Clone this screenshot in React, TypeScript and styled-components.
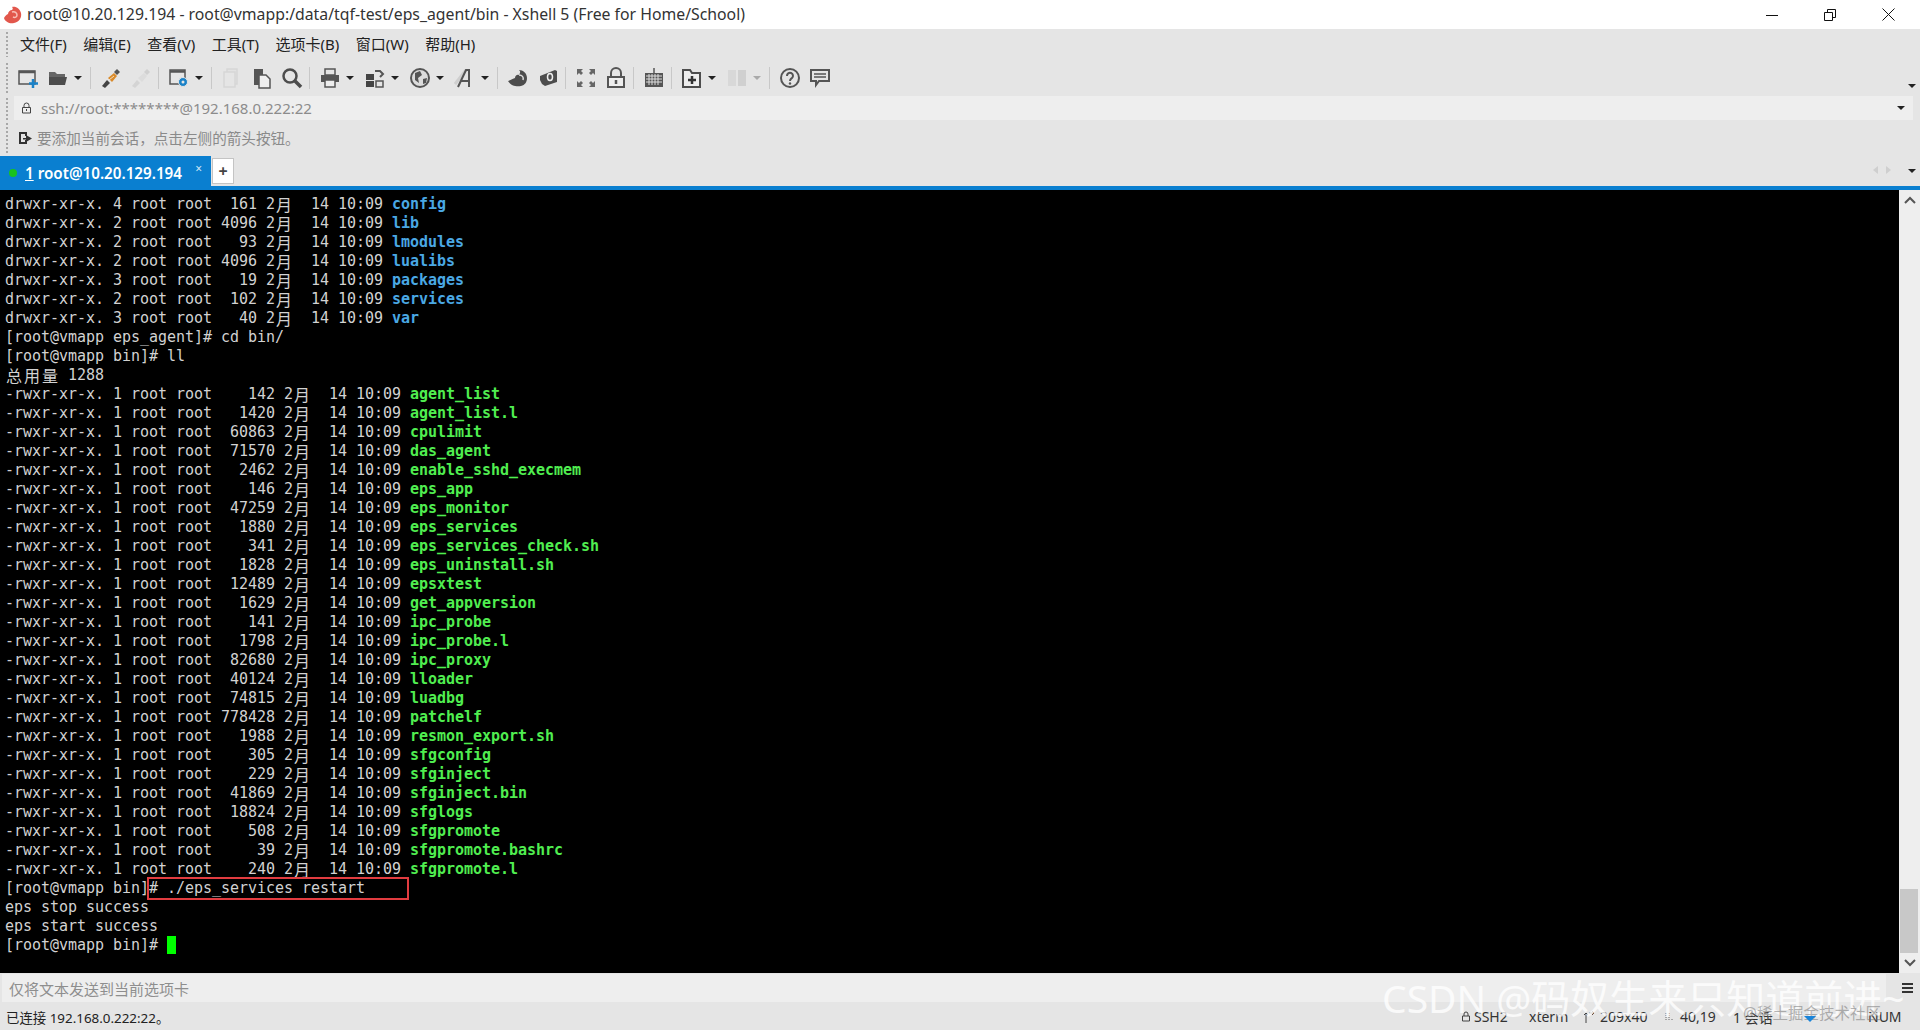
import React from 'react';
import styled, { createGlobalStyle } from 'styled-components';

const UI_FONT = '"Noto Sans", "Noto Sans CJK SC", sans-serif';

const GlobalStyle = createGlobalStyle`
  html, body {
    margin: 0;
    padding: 0;
    background: #e5e5e5;
    overflow: hidden;
  }
  * { box-sizing: border-box; }
`;

type Tone = 'plain' | 'dir' | 'exec';

const DIRS: [string, string, string][] = [
  ['4', ' 161', 'config'],
  ['2', '4096', 'lib'],
  ['2', '  93', 'lmodules'],
  ['2', '4096', 'lualibs'],
  ['3', '  19', 'packages'],
  ['2', ' 102', 'services'],
  ['3', '  40', 'var'],
];

const FILES: [string, string][] = [
  ['   142', 'agent_list'],
  ['  1420', 'agent_list.l'],
  [' 60863', 'cpulimit'],
  [' 71570', 'das_agent'],
  ['  2462', 'enable_sshd_execmem'],
  ['   146', 'eps_app'],
  [' 47259', 'eps_monitor'],
  ['  1880', 'eps_services'],
  ['   341', 'eps_services_check.sh'],
  ['  1828', 'eps_uninstall.sh'],
  [' 12489', 'epsxtest'],
  ['  1629', 'get_appversion'],
  ['   141', 'ipc_probe'],
  ['  1798', 'ipc_probe.l'],
  [' 82680', 'ipc_proxy'],
  [' 40124', 'lloader'],
  [' 74815', 'luadbg'],
  ['778428', 'patchelf'],
  ['  1988', 'resmon_export.sh'],
  ['   305', 'sfgconfig'],
  ['   229', 'sfginject'],
  [' 41869', 'sfginject.bin'],
  [' 18824', 'sfglogs'],
  ['   508', 'sfgpromote'],
  ['    39', 'sfgpromote.bashrc'],
  ['   240', 'sfgpromote.l'],
];

const MENU = ['文件(F)', '编辑(E)', '查看(V)', '工具(T)', '选项卡(B)', '窗口(W)', '帮助(H)'];

const Window = styled.div`
  width: 1920px;
  height: 1030px;
  display: flex;
  flex-direction: column;
  position: relative;
  overflow: hidden;
  background: #e5e5e5;
  font-family: ${UI_FONT};
`;

const TitleBar = styled.div`
  height: 29px;
  background: #fff;
  display: flex;
  align-items: center;
  padding-left: 3px;
  color: #333;
`;

const TitleText = styled.span`
  margin-left: 4px;
  margin-top: -2px;
  font-size: 15.8px;
  white-space: nowrap;
`;

const WindowControls = styled.div`
  margin-left: auto;
  display: flex;
  margin-right: 3px;
`;

const WindowButton = styled.div`
  width: 58px;
  height: 29px;
  display: flex;
  align-items: center;
  justify-content: center;
`;

const Bar = styled.div<{ $h: number }>`
  height: ${(p) => p.$h}px;
  display: flex;
  align-items: center;
  position: relative;
`;

const Grip = styled.div`
  position: absolute;
  left: 6px;
  top: 3px;
  bottom: 3px;
  width: 2px;
  background: repeating-linear-gradient(to bottom, #a8a8a8 0 2px, transparent 2px 4px);
`;

const Menu = styled(Bar)`
  padding: 0 0 2px 20px;
  gap: 16.5px;
  font-size: 15px;
  color: #222;
`;

const Toolbar = styled(Bar)`
  padding-left: 13px;
`;

const ToolButton = styled.div`
  width: 30px;
  height: 30px;
  display: flex;
  align-items: center;
  justify-content: center;
  flex: none;
`;

const Caret = styled.div<{ $off?: boolean }>`
  width: 10px;
  margin-right: 5px;
  flex: none;
  display: flex;
  justify-content: center;
  &::before {
    content: '';
    border-left: 4px solid transparent;
    border-right: 4px solid transparent;
    border-top: 4px solid ${(p) => (p.$off ? '#aaa' : '#222')};
  }
`;

const Sep = styled.div`
  width: 1px;
  height: 22px;
  margin: 0 5px 0 2px;
  background: #c8c8c8;
  flex: none;
`;

const EndCaret = styled.div<{ $right: number }>`
  position: absolute;
  right: ${(p) => p.$right}px;
  border-left: 4px solid transparent;
  border-right: 4px solid transparent;
  border-top: 4px solid #222;
`;

const ToolbarEnd = styled(EndCaret)`
  top: 24px;
`;

const AddressBar = styled.div`
  height: 24px;
  margin: 0 7px 0 14px;
  background: #eeeeee;
  display: flex;
  align-items: center;
  padding-left: 7px;
  gap: 9px;
  font-size: 15px;
  color: #8c8c8c;
  position: relative;
`;

const AddressRow = styled.div`
  position: relative;
`;

const AddressGrip = styled(Grip)`
  top: 2px;
  bottom: 0;
`;

const AddressCaret = styled(EndCaret)`
  top: 10px;
  right: 8px;
`;

const Hint = styled(Bar)`
  padding: 0 0 1px 19px;
  gap: 5px;
  font-size: 14.6px;
  color: #8a8a8a;
`;

const TabStrip = styled.div`
  height: 34px;
  border-bottom: 4px solid #0a7fd0;
  display: flex;
  align-items: stretch;
  position: relative;
`;

const Tab = styled.div`
  width: 211px;
  background: #0a7fd0;
  color: #fff;
  display: flex;
  align-items: center;
  padding: 3px 0 0 9px;
  font-size: 15.2px;
  font-weight: 600;
  position: relative;
`;

const TabDot = styled.span`
  width: 8px;
  height: 8px;
  border-radius: 50%;
  background: #19c21e;
  margin-right: 8px;
`;

const TabNumber = styled.span`
  text-decoration: underline;
  margin-right: 4px;
`;

const TabClose = styled.span`
  position: absolute;
  right: 9px;
  top: 4px;
  font-size: 12px;
  font-weight: 400;
  color: #cfe6f7;
`;

const AddTab = styled.div`
  width: 22px;
  height: 26px;
  margin: 2px 0 0 1px;
  background: #fff;
  border: 1px solid #c4c4c4;
  display: flex;
  align-items: center;
  justify-content: center;
  font-size: 16px;
  font-weight: 700;
  color: #444;
`;

const TabNav = styled.div<{ $flip?: boolean; $right: number }>`
  position: absolute;
  top: 10px;
  right: ${(p) => p.$right}px;
  border-top: 4px solid transparent;
  border-bottom: 4px solid transparent;
  ${(p) => (p.$flip ? 'border-left: 5px solid #cfcfcf;' : 'border-right: 5px solid #cfcfcf;')}
`;

const TabEndCaret = styled(EndCaret)`
  top: 13px;
  right: 4px;
`;

const TerminalArea = styled.div`
  height: 783px;
  background: #000;
  display: flex;
`;

const Screen = styled.div`
  flex: 1;
  padding: 5px 0 0 5px;
  overflow: hidden;
  font-family: "DejaVu Sans Mono", "Liberation Mono", monospace;
  font-size: 15px;
  letter-spacing: -0.03px;
  line-height: 19px;
  color: #d2d2d2;
`;

const Line = styled.div`
  height: 19px;
  white-space: pre;
`;

const Wide = styled.span`
  display: inline-block;
  width: 18px;
  font-family: "Noto Sans CJK SC", sans-serif;
  font-size: 16px;
  line-height: 19px;
  vertical-align: top;
  text-align: center;
`;

const Name = styled.span<{ $tone: Tone }>`
  font-weight: 700;
  color: ${(p) => (p.$tone === 'dir' ? '#4aa8e4' : '#50ee50')};
`;

const Marked = styled.span`
  position: relative;
  &::after {
    content: '';
    box-sizing: border-box;
    position: absolute;
    left: -2px;
    top: -2px;
    width: 262px;
    height: 23px;
    border: 2px solid #e23c40;
  }
`;

const Cursor = styled.span`
  display: inline-block;
  width: 9px;
  height: 18px;
  background: #00ff00;
  vertical-align: top;
  margin-left: 9px;
`;

const Scrollbar = styled.div`
  width: 21px;
  background: #eeeeee;
  display: flex;
  flex-direction: column;
  align-items: center;
  justify-content: space-between;
  padding: 6px 0;
  position: relative;
`;

const ScrollThumb = styled.div`
  position: absolute;
  left: 1px;
  right: 2px;
  top: 699px;
  height: 64px;
  background: #c8c8c8;
`;

const ComposeRow = styled.div`
  height: 30px;
  display: flex;
  align-items: center;
  position: relative;
`;

const ComposeBox = styled.div`
  margin: 0 34px 0 2px;
  flex: 1;
  height: 28px;
  background: #eeeeee;
  display: flex;
  align-items: center;
  padding-left: 7px;
  font-size: 15px;
  color: #8e8e8e;
`;

const MenuLines = styled.div`
  position: absolute;
  right: 7px;
  top: 10px;
  width: 11px;
  height: 10px;
  border-top: 2px solid #333;
  border-bottom: 2px solid #333;
  &::after {
    content: '';
    display: block;
    margin-top: 2px;
    height: 2px;
    background: #333;
  }
`;

const StatusBar = styled.div`
  flex: 1;
  display: flex;
  align-items: center;
  padding: 0 18px 0 6px;
  font-size: 13.4px;
  color: #222;
`;

const StatusRight = styled.div`
  margin-left: auto;
  display: flex;
  align-items: center;
  color: #333;
  font-size: 14px;
`;

const StatusCell = styled.span<{ $w: number; $gap?: number }>`
  width: ${(p) => p.$w}px;
  display: flex;
  align-items: center;
  gap: ${(p) => p.$gap ?? 3}px;
  white-space: nowrap;
`;

const Watermark = styled.div`
  position: absolute;
  left: 1382px;
  top: 974px;
  font-size: 39px;
  line-height: 48px;
  color: rgba(255, 255, 255, 0.78);
  white-space: nowrap;
`;

const Watermark2 = styled.div`
  position: absolute;
  left: 1743px;
  top: 1001px;
  font-size: 15.5px;
  line-height: 24px;
  color: rgba(110, 110, 110, 0.5);
  white-space: nowrap;
`;

const Arrows = styled.span`
  position: absolute;
  left: 1804px;
  top: 1016px;
  width: 0;
  height: 0;
  border-left: 6px solid transparent;
  border-right: 6px solid transparent;
  border-top: 6px solid #1b84d8;
`;

function Icon({ children, size = 22 }: { children: React.ReactNode; size?: number }) {
  return (
    <svg width={size} height={size} viewBox="0 0 22 22" fill="none">
      {children}
    </svg>
  );
}

const GRAY = '#555';

const icons: Record<string, React.ReactNode> = {
  newSession: (
    <>
      <path d="M2 4h16v13H2z" stroke={GRAY} strokeWidth="1.500" />
      <path d="M2 5h16" stroke={GRAY} strokeWidth="2.500" />
      <path d="M16 12v9M12 16.500h9" stroke="#1a82c8" strokeWidth="2.500" />
    </>
  ),
  open: (
    <>
      <path d="M2 5h6l2 2h8v3H2z" fill="#666" />
      <path d="M2 10h18l-2 8H2z" fill="#4d4d4d" />
    </>
  ),
  connect: (
    <>
      <path d="M2 19l5-6 3 3-5 5z" fill="#444" />
      <path d="M8 11l6-5 3 3-5 6z" fill="#d98a2b" />
      <path d="M9 13l5-4" stroke="#f3e0c2" strokeWidth="1" />
      <path d="M14 5l3-3 3 3-3 3z" fill="#555" />
    </>
  ),
  disconnect: (
    <>
      <path d="M2 19l5-6 3 3-5 5z" fill="#d4d4d4" />
      <path d="M8 11l6-5 3 3-5 6z" fill="#dcdcdc" />
      <path d="M14 5l3-3 3 3-3 3z" fill="#d0d0d0" />
    </>
  ),
  props: (
    <>
      <path d="M2 3h15v14H2z" stroke={GRAY} strokeWidth="1.500" />
      <path d="M2 4.500h15" stroke={GRAY} strokeWidth="2.500" />
      <circle cx="15" cy="15" r="4.500" fill="#1a82c8" stroke="#e5e5e5" />
      <circle cx="15" cy="15" r="1.500" fill="#e5e5e5" />
    </>
  ),
  copyOff: (
    <>
      <path d="M6 2h10v15H6z" stroke="#d6d6d6" strokeWidth="1.500" fill="#e2e2e2" />
      <path d="M3 5h11v15H3z" stroke="#d6d6d6" strokeWidth="1.500" fill="#e5e5e5" />
    </>
  ),
  paste: (
    <>
      <path d="M3 2h9v16H3z" fill="#555" />
      <path d="M8 8h7l4 4v9H8z" fill="#efefef" stroke="#555" strokeWidth="1.500" />
    </>
  ),
  find: (
    <>
      <circle cx="9" cy="9" r="6.500" stroke="#4d4d4d" strokeWidth="2.500" />
      <path d="M14 14l6 6" stroke="#4d4d4d" strokeWidth="3.500" />
    </>
  ),
  print: (
    <>
      <path d="M6 2h10v6H6z" stroke={GRAY} strokeWidth="1.500" />
      <path d="M2 8h18v7H2z" fill="#555" />
      <path d="M6 13h10v7H6z" fill="#eee" stroke={GRAY} strokeWidth="1.500" />
    </>
  ),
  transfer: (
    <>
      <path d="M2 7h8v6H2z" fill="#444" />
      <path d="M2 14h8v6H2z" fill="#444" />
      <path d="M12 14h7v6h-7z" stroke="#555" strokeWidth="1.500" />
      <path d="M11 4h5l3 3-3 3" stroke="#555" strokeWidth="2" />
    </>
  ),
  globe: (
    <>
      <circle cx="11" cy="11" r="9" stroke="#555" strokeWidth="2" fill="#dcdcdc" />
      <path d="M6 6l5-2 2 4-4 3 1 5-4-3zM14 12l4-1-1 5-3 1z" fill="#555" />
    </>
  ),
  font: (
    <>
      <path d="M1 17L12 3" stroke="#cfcfcf" strokeWidth="3" />
      <path d="M4 20l8-17h3v17M7 14h8" stroke="#555" strokeWidth="2" />
    </>
  ),
  snail: (
    <>
      <path d="M1 14c3 5 9 6 13 5 4-1 6-4 6-8 0-5-4-8-8-8 2 2 1 3 0 5-2-1-4 1-4 3-3 1-4 2-7 3z" fill="#4d4d4d" />
      <path d="M12 8c3 0 5 2 4 5" stroke="#ddd" strokeWidth="1.500" />
    </>
  ),
  script: (
    <>
      <path d="M3 9l5-2 10-4 2 1v11l-12 4-3-2-2-4z" fill="#4d4d4d" />
      <ellipse cx="13" cy="10" rx="2.500" ry="3.500" stroke="#eee" strokeWidth="1.500" />
    </>
  ),
  fullscreen: (
    <path d="M2 2h6l-2 2 2 2-2 2-2-2-2 2zM20 2h-6l2 2-2 2 2 2 2-2 2 2zM2 20h6l-2-2 2-2-2-2-2 2-2-2zM20 20h-6l2-2-2-2 2-2 2 2 2-2z" fill="#666" />
  ),
  lock: (
    <>
      <path d="M6 10V6a5 5 0 0 1 10 0v4" stroke="#555" strokeWidth="2" />
      <path d="M3 10h16v10H3z" stroke="#555" strokeWidth="2" fill="#eee" />
      <path d="M11 13v4" stroke="#555" strokeWidth="2.500" />
    </>
  ),
  keyboard: (
    <>
      <path d="M11 1v5" stroke="#555" strokeWidth="1.500" />
      <path d="M2 6h18v14H2z" fill="#555" />
      <path d="M3 9h16M3 12h16M3 15h16M6 7v11M9 7v11M12 7v11M15 7v11" stroke="#ddd" strokeWidth="1" />
    </>
  ),
  addTab: (
    <>
      <path d="M2 3h7l2 3h8v14H2z" stroke="#4d4d4d" strokeWidth="2" fill="#eee" />
      <path d="M11 9v8M7 13h8" stroke="#333" strokeWidth="2.500" />
    </>
  ),
  layoutOff: (
    <>
      <path d="M2 3h8v16H2z" fill="#d8d8d8" />
      <path d="M12 3h8v16h-8z" fill="#d0d0d0" />
    </>
  ),
  help: (
    <>
      <circle cx="11" cy="11" r="9" stroke="#555" strokeWidth="2" />
      <path d="M8 9a3 3 0 1 1 5 2c-1 1-2 1-2 3" stroke="#555" strokeWidth="2" />
      <circle cx="11" cy="16.500" r="1.200" fill="#555" />
    </>
  ),
  chat: (
    <>
      <path d="M2 3h18v11H10l-3 4v-4H2z" stroke="#555" strokeWidth="2" />
      <path d="M5 7h12M5 10h12" stroke="#555" strokeWidth="1.500" />
    </>
  ),
};

const Tool = ({ name }: { name: string }) => (
  <ToolButton>
    <Icon>{icons[name]}</Icon>
  </ToolButton>
);

function withWide(text: string) {
  return text.split(/([\u4e00-\u9fff])/).map((part, i) =>
    /[\u4e00-\u9fff]/.test(part) ? <Wide key={i}>{part}</Wide> : part,
  );
}

export default function App() {
  return (
    <Window>
      <GlobalStyle />
      <TitleBar>
        <svg width="20" height="20" viewBox="0 0 20 20">
          <path d="M1 13c1 4 6 6 10 5 5-1 8-5 7-10-1-4-5-7-9-6 1 1 1 2 0 3-2 0-4 2-4 4-2 1-3 2-4 4z" fill="#e2574c" />
          <path d="M9 7c3-1 5 1 5 3s-2 3-4 2" stroke="#f8c0b8" strokeWidth="1.500" fill="none" />
        </svg>
        <TitleText>root@10.20.129.194 - root@vmapp:/data/tqf-test/eps_agent/bin - Xshell 5 (Free for Home/School)</TitleText>
        <WindowControls>
          <WindowButton>
            <svg width="12" height="12"><path d="M0 6.500h12" stroke="#111" /></svg>
          </WindowButton>
          <WindowButton>
            <svg width="12" height="12"><path d="M.5 3.500h8v8h-8zM3.500 3.500v-3h8v8h-3" stroke="#111" fill="none" /></svg>
          </WindowButton>
          <WindowButton>
            <svg width="13" height="13"><path d="M.5.500l12 12M12.500.500l-12 12" stroke="#111" /></svg>
          </WindowButton>
        </WindowControls>
      </TitleBar>

      <Menu $h={31}>
        <Grip />
        {MENU.map((m) => (
          <span key={m}>{m}</span>
        ))}
      </Menu>

      <Toolbar $h={36}>
        <Grip />
        <Tool name="newSession" />
        <Tool name="open" />
        <Caret />
        <Sep />
        <Tool name="connect" />
        <Tool name="disconnect" />
        <Sep />
        <Tool name="props" />
        <Caret />
        <Sep />
        <Tool name="copyOff" />
        <Tool name="paste" />
        <Tool name="find" />
        <Sep />
        <Tool name="print" />
        <Caret />
        <Tool name="transfer" />
        <Caret />
        <Tool name="globe" />
        <Caret />
        <Tool name="font" />
        <Caret />
        <Sep />
        <Tool name="snail" />
        <Tool name="script" />
        <Sep />
        <Tool name="fullscreen" />
        <Tool name="lock" />
        <Sep />
        <Tool name="keyboard" />
        <Sep />
        <Tool name="addTab" />
        <Caret />
        <Tool name="layoutOff" />
        <Caret $off />
        <Sep />
        <Tool name="help" />
        <Tool name="chat" />
        <ToolbarEnd $right={4} />
      </Toolbar>

      <AddressRow>
        <AddressGrip />
        <AddressBar>
          <svg width="11" height="12" viewBox="0 0 11 12">
            <path d="M3 5V3.500a2.500 2.500 0 0 1 5 0V5" stroke="#444" fill="none" />
            <path d="M1.500 5.500h8v5.500h-8z" stroke="#444" fill="none" />
            <path d="M5.500 7v2" stroke="#444" />
          </svg>
          <span>ssh://root:********@192.168.0.222:22</span>
          <AddressCaret $right={8} />
        </AddressBar>
      </AddressRow>

      <Hint $h={36}>
        <Grip />
        <svg width="13" height="14" viewBox="0 0 13 14">
          <path d="M0 1h8v4H6V3H2v8h4V9h2v4H0z" fill="#333" />
          <path d="M4 7h3V4l6 3.500L7 11V8.500H4z" fill="#333" />
        </svg>
        <span>要添加当前会话，点击左侧的箭头按钮。</span>
      </Hint>

      <TabStrip>
        <Tab>
          <TabDot />
          <TabNumber>1</TabNumber>
          root@10.20.129.194
          <TabClose>×</TabClose>
        </Tab>
        <AddTab>+</AddTab>
        <TabNav $right={42} />
        <TabNav $right={29} $flip />
        <TabEndCaret $right={4} />
      </TabStrip>

      <TerminalArea>
        <Screen>
          {DIRS.map(([links, size, name]) => (
            <Line key={name}>
              {withWide(`drwxr-xr-x. ${links} root root ${size} 2月  14 10:09 `)}
              <Name $tone="dir">{name}</Name>
            </Line>
          ))}
          <Line>[root@vmapp eps_agent]# cd bin/</Line>
          <Line>[root@vmapp bin]# ll</Line>
          <Line>{withWide('总用量 1288')}</Line>
          {FILES.map(([size, name]) => (
            <Line key={name}>
              {withWide(`-rwxr-xr-x. 1 root root ${size} 2月  14 10:09 `)}
              <Name $tone="exec">{name}</Name>
            </Line>
          ))}
          <Line>
            [root@vmapp bin]<Marked># ./eps_services restart</Marked>
          </Line>
          <Line>eps stop success</Line>
          <Line>eps start success</Line>
          <Line>
            [root@vmapp bin]#
            <Cursor />
          </Line>
        </Screen>
        <Scrollbar>
          <svg width="12" height="8" viewBox="0 0 12 8"><path d="M1 7l5-5 5 5" stroke="#555" strokeWidth="2" fill="none" /></svg>
          <ScrollThumb />
          <svg width="12" height="8" viewBox="0 0 12 8"><path d="M1 1l5 5 5-5" stroke="#555" strokeWidth="2" fill="none" /></svg>
        </Scrollbar>
      </TerminalArea>

      <ComposeRow>
        <ComposeBox>仅将文本发送到当前选项卡</ComposeBox>
        <MenuLines />
      </ComposeRow>

      <StatusBar>
        <span>已连接 192.168.0.222:22。</span>
        <StatusRight>
          <StatusCell $w={68}>
            <svg width="10" height="11" viewBox="0 0 10 11">
              <path d="M3 5V3a2 2 0 0 1 4 0v2M1.500 5h7v5h-7z" stroke="#444" fill="none" />
            </svg>
            SSH2
          </StatusCell>
          <StatusCell $w={54}>xterm</StatusCell>
          <StatusCell $w={82} $gap={5}>
            <svg width="12" height="12" viewBox="0 0 12 12">
              <path d="M3 12V2M1 4l2-2 2 2M6 2h5M9 0l2 2-2 2" stroke="#444" fill="none" />
            </svg>
            209x40
          </StatusCell>
          <StatusCell $w={68} $gap={5}>
            <svg width="10" height="10" viewBox="0 0 10 10">
              <path d="M1 1v8M4 1v8M7 7v2" stroke="#666" strokeDasharray="1 1" />
            </svg>
            40,19
          </StatusCell>
          <StatusCell $w={135}>1 会话</StatusCell>
          <StatusCell $w={34}>NUM</StatusCell>
        </StatusRight>
      </StatusBar>

      <Watermark>CSDN @码奴生来只知道前进~</Watermark>
      <Watermark2>@稀土掘金技术社区</Watermark2>
      <Arrows />
    </Window>
  );
}
